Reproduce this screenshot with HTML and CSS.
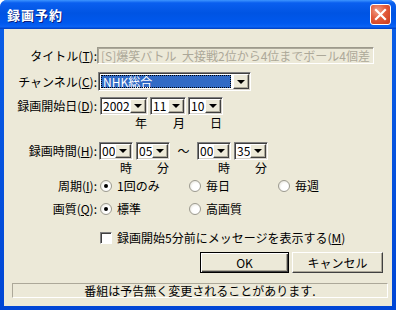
FILE: index.html
```html
<!DOCTYPE html>
<html lang="ja">

<head>
    <meta charset="UTF-8">
    <title>録画予約</title>
    <link rel="stylesheet" href="styles.css">
</head>

<body>
    <div class="window">
        <div class="titlebar">
            <span class="caption">録画予約</span>
            <div class="close">
                <svg width="13" height="13" viewBox="0 0 13 13">
                    <path d="M2 2 L11 11 M11 2 L2 11" stroke="#fff" stroke-width="2.2" stroke-linecap="square" />
                </svg>
            </div>
        </div>
        <div class="client">
            <div class="row">
                <label class="label">タイトル(<u>T</u>):</label>
                <div class="edit">[S]爆笑バトル&nbsp;&nbsp;大接戦2位から4位までボール4個差</div>
            </div>

            <div class="row row-channel">
                <label class="label">チャンネル(<u>C</u>):</label>
                <div class="combo combo-channel">
                    <div class="value"><span class="selected">NHK総合</span></div>
                    <div class="btn"><i class="arrow"></i></div>
                </div>
            </div>

            <div class="row row-date">
                <label class="label">録画開始日(<u>D</u>):</label>
                <div class="group">
                    <div class="field">
                        <div class="combo w-year">
                            <div class="value">2002</div>
                            <div class="btn"><i class="arrow"></i></div>
                        </div>
                        <span class="unit">年</span>
                    </div>
                    <div class="field">
                        <div class="combo w-md">
                            <div class="value">11</div>
                            <div class="btn"><i class="arrow"></i></div>
                        </div>
                        <span class="unit">月</span>
                    </div>
                    <div class="field">
                        <div class="combo w-day">
                            <div class="value">10</div>
                            <div class="btn"><i class="arrow"></i></div>
                        </div>
                        <span class="unit">日</span>
                    </div>
                </div>
            </div>

            <div class="row row-time">
                <label class="label">録画時間(<u>H</u>):</label>
                <div class="group">
                    <div class="field">
                        <div class="combo w-time">
                            <div class="value">00</div>
                            <div class="btn"><i class="arrow"></i></div>
                        </div>
                        <span class="unit">時</span>
                    </div>
                    <div class="field">
                        <div class="combo w-time">
                            <div class="value">05</div>
                            <div class="btn"><i class="arrow"></i></div>
                        </div>
                        <span class="unit">分</span>
                    </div>
                    <span class="tilde">～</span>
                    <div class="field">
                        <div class="combo w-time">
                            <div class="value">00</div>
                            <div class="btn"><i class="arrow"></i></div>
                        </div>
                        <span class="unit">時</span>
                    </div>
                    <div class="field">
                        <div class="combo w-time">
                            <div class="value">35</div>
                            <div class="btn"><i class="arrow"></i></div>
                        </div>
                        <span class="unit">分</span>
                    </div>
                </div>
            </div>

            <div class="row row-radio1">
                <label class="label">周期(<u>I</u>):</label>
                <div class="options">
                    <span class="option"><i class="radio checked"></i><span>1回のみ</span></span>
                    <span class="option"><i class="radio"></i><span>毎日</span></span>
                    <span class="option"><i class="radio"></i><span>毎週</span></span>
                </div>
            </div>

            <div class="row row-radio2">
                <label class="label">画質(<u>Q</u>):</label>
                <div class="options">
                    <span class="option"><i class="radio checked"></i><span>標準</span></span>
                    <span class="option"><i class="radio"></i><span>高画質</span></span>
                </div>
            </div>

            <div class="row row-check">
                <span class="check-wrap"><i class="checkbox"></i><span>録画開始5分前にメッセージを表示する(<u>M</u>)</span></span>
            </div>

            <div class="buttons">
                <button class="button default">OK</button>
                <button class="button cancel">キャンセル</button>
            </div>

            <div class="status">番組は予告無く変更されることがあります.</div>
        </div>
    </div>
</body>

</html>
```

FILE: styles.css
```css
body {
    margin: 0;
    background-color: #fff;
    font-family: "Noto Sans CJK JP", "DejaVu Sans", sans-serif;
    font-size: 12px;
    line-height: 14px;
    color: #000;
}

.window {
    width: 396px;
    height: 310px;
    box-sizing: border-box;
    border-radius: 7px 7px 0 0;
    padding: 0 4px 4px 4px;
    background: linear-gradient(#0a5fe8, #0046d5);
}

.titlebar {
    height: 29px;
    display: flex;
    align-items: center;
    justify-content: space-between;
    margin: 0 -4px;
    padding: 0 5px 0 7px;
    border-radius: 7px 7px 0 0;
    background: linear-gradient(#3d95ff 0%, #0a5fef 10%, #0054e3 45%, #0058ee 80%, #0a62f5 92%, #003dc0 100%);
}

.caption {
    color: #fff;
    font-weight: bold;
    font-size: 13px;
    letter-spacing: 1px;
    text-shadow: 1px 1px #0a1e80;
}

.close {
    width: 21px;
    height: 21px;
    box-sizing: border-box;
    border: 1px solid #fff;
    border-radius: 3px;
    background: radial-gradient(circle at 35% 30%, #f0a08a 0%, #e25a3a 45%, #c83a1c 100%);
    display: flex;
    align-items: center;
    justify-content: center;
}

.client {
    height: 277px;
    box-sizing: border-box;
    background-color: #ece9d8;
    padding-top: 18px;
}

.row {
    display: flex;
    align-items: flex-start;
}

.label {
    width: 93px;
    text-align: right;
    white-space: nowrap;
    padding-top: 2px;
}

.edit {
    width: 277px;
    height: 17px;
    box-sizing: border-box;
    border: 1px solid;
    border-color: #9d9a8c #fff #fff #9d9a8c;
    box-shadow: inset 1px 1px #aca899;
    padding: 1px 0 0 3px;
    color: #aca899;
    white-space: nowrap;
    overflow: hidden;
}

.row-channel {
    margin-top: 8px;
}

.row-channel .label {
    padding-top: 3px;
}

.combo {
    display: flex;
    height: 18px;
    box-sizing: border-box;
    border: 1px solid;
    border-color: #808080 #fff #fff #808080;
    box-shadow: inset 1px 1px #404040, inset -1px -1px #d4d0c8;
    padding: 1px;
    background-color: #fff;
}

.combo-channel {
    width: 153px;
    height: 19px;
    margin-left: 1px;
}

.value {
    flex: 1;
    min-width: 0;
    padding-left: 1px;
    white-space: nowrap;
}

.combo-channel .value {
    padding: 1px 2px 1px 1px;
}

.selected {
    display: block;
    height: 100%;
    box-sizing: border-box;
    background-color: #316ac5;
    color: #fff;
    padding-left: 2px;
    outline: 1px dotted #000;
    outline-offset: -1px;
}

.btn {
    flex: none;
    width: 16px;
    box-sizing: border-box;
    background-color: #ece9d8;
    border: 1px solid;
    border-color: #fff #404040 #404040 #fff;
    box-shadow: inset -1px -1px #aca899;
    display: flex;
    align-items: center;
    justify-content: center;
}

.arrow {
    width: 0;
    height: 0;
    border-left: 4px solid transparent;
    border-right: 4px solid transparent;
    border-top: 4px solid #000;
}

.row-date {
    margin-top: 6px;
}

.row-date .label,
.row-time .label {
    padding-top: 2px;
}

.group {
    display: flex;
    gap: 2px;
    margin-left: 3px;
}

.field {
    display: flex;
    flex-direction: column;
    align-items: flex-end;
}

.unit {
    margin-top: 2px;
    padding-right: 1px;
    line-height: 12px;
}

.w-year {
    width: 48px;
}

.w-md {
    width: 36px;
}

.w-day {
    width: 35px;
}

.w-time {
    width: 34px;
}

.row-time {
    margin-top: 13px;
}

.row-time .group {
    gap: 3px;
    margin-left: 2px;
}

.tilde {
    width: 21px;
    text-align: center;
    padding-top: 2px;
}

.row-radio1 {
    margin-top: 5px;
}

.row-radio2 {
    margin-top: 9px;
}

.row-radio1 .label,
.row-radio2 .label {
    padding-top: 0;
}

.options {
    display: flex;
    margin-left: 3px;
}

.option {
    width: 89px;
    display: flex;
    align-items: center;
    gap: 5px;
}

.radio {
    width: 12px;
    height: 12px;
    box-sizing: border-box;
    border-radius: 50%;
    border: 1px solid #9c9a90;
    background: radial-gradient(circle at 60% 60%, #fff 40%, #dcd9cc 100%);
    display: flex;
    align-items: center;
    justify-content: center;
}

.radio.checked::after {
    content: "";
    width: 4px;
    height: 4px;
    border-radius: 50%;
    background-color: #000;
}

.row-check {
    margin-top: 15px;
    padding-left: 96px;
}

.check-wrap {
    display: flex;
    align-items: center;
    gap: 5px;
}

.checkbox {
    width: 12px;
    height: 12px;
    box-sizing: border-box;
    border: 1px solid;
    border-color: #808080 #fff #fff #808080;
    box-shadow: inset 1px 1px #404040;
    background-color: #fff;
}

.buttons {
    display: flex;
    justify-content: flex-end;
    gap: 3px;
    padding-right: 9px;
    margin-top: 7px;
}

.button {
    height: 21px;
    box-sizing: border-box;
    font-family: inherit;
    font-size: 12px;
    line-height: 14px;
    padding: 0;
    background-color: #ece9d8;
    border: 1px solid;
    border-color: #fff #404040 #404040 #fff;
    box-shadow: inset -1px -1px #aca899;
    color: #000;
}

.default {
    width: 89px;
    border-color: #000;
    box-shadow: inset 1px 1px #fff, inset -1px -1px #404040, inset -2px -2px #aca899;
}

.cancel {
    width: 91px;
}

.status {
    margin: 10px 4px 0 8px;
    height: 15px;
    box-sizing: border-box;
    border: 1px solid;
    border-color: #aca899 #fff #fff #aca899;
    text-align: center;
    line-height: 13px;
}
```
